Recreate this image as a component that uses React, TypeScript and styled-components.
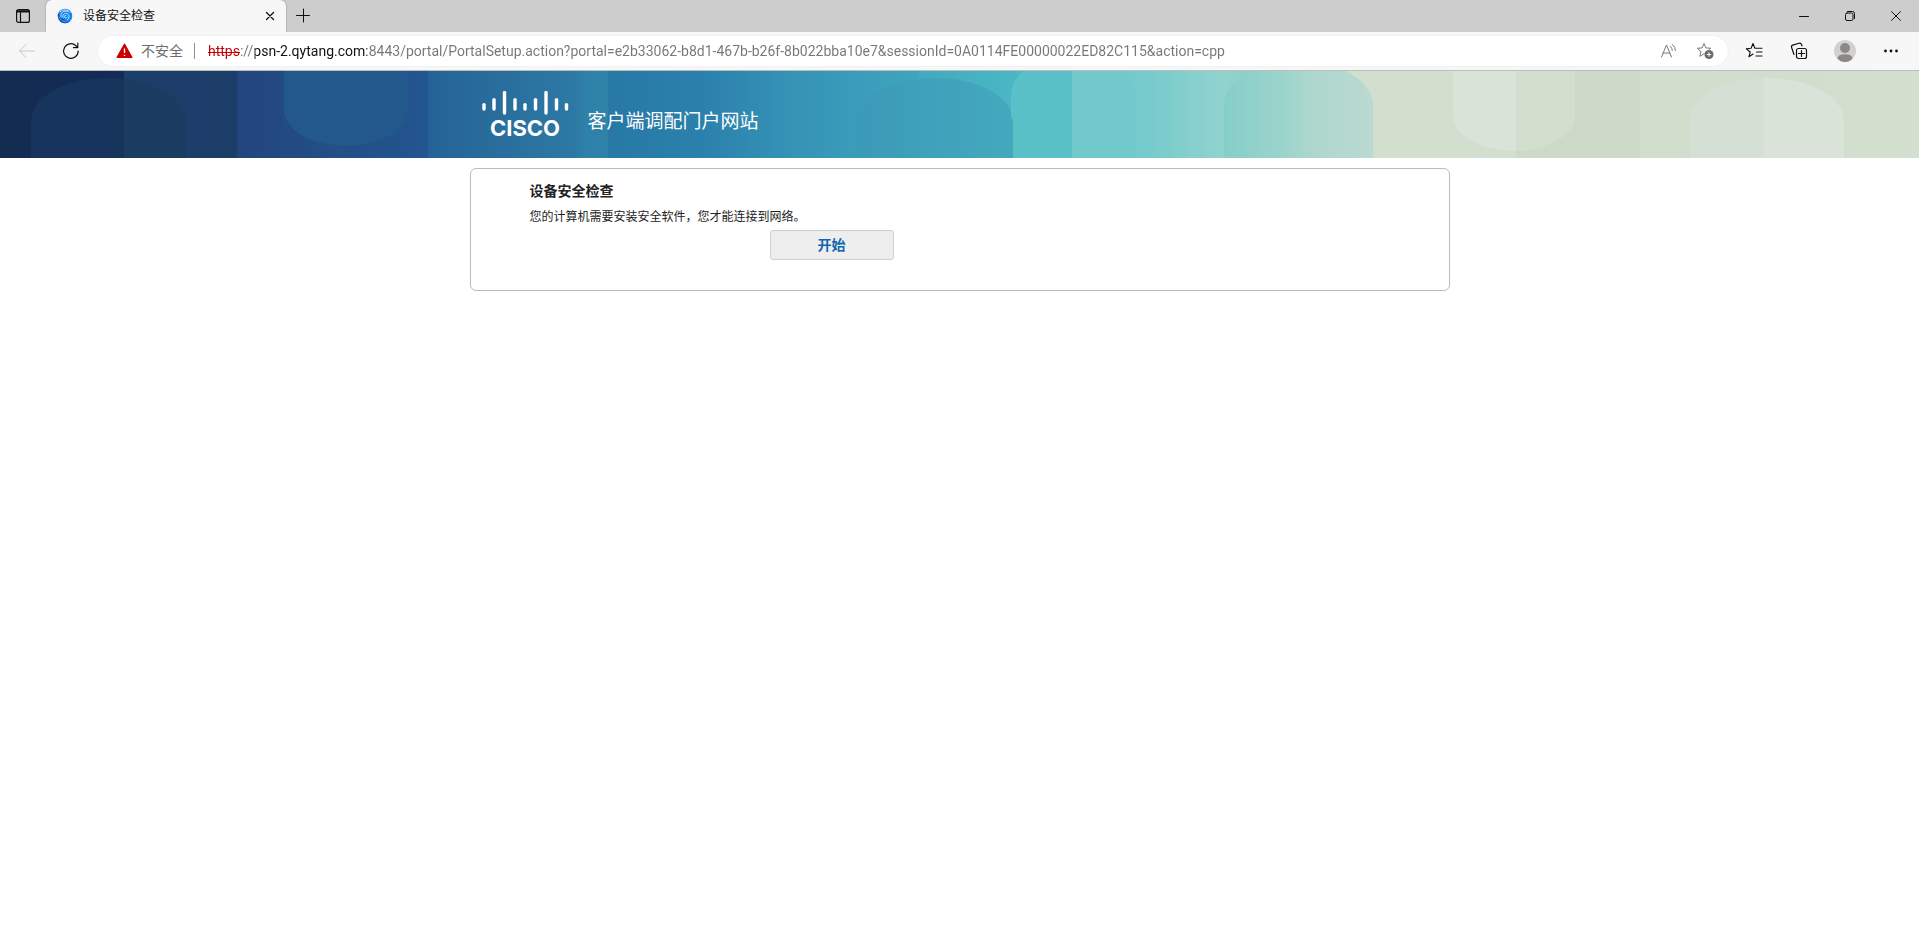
import React from "react";
import styled, { createGlobalStyle } from "styled-components";

const GlobalStyle = createGlobalStyle`
  * { box-sizing: border-box; }
  body {
    margin: 0;
    background: #fff;
    color: #1a1a1a;
    font-family: "Open Sans", "Noto Sans CJK SC", sans-serif;
    font-size: 12px;
  }
  button, input { font: inherit; color: inherit; }
`;

const TabStrip = styled.header`
  display: flex;
  height: 32px;
  background: #cdcdcd;
`;

const ChromeButton = styled.button<{ $width: number; $dim?: boolean }>`
  display: flex;
  align-items: center;
  justify-content: center;
  flex: none;
  width: ${(p) => p.$width}px;
  padding: 0;
  border: 0;
  background: none;
  color: ${(p) => (p.$dim ? "#c8c8c8" : "#111")};
`;

const Tab = styled.div`
  display: flex;
  align-items: center;
  width: 240px;
  padding-left: 11px;
  border-radius: 6px 6px 0 0;
  background: #f7f7f7;
  box-shadow: 0 0 2px rgba(0, 0, 0, 0.35);
  clip-path: inset(0 -3px 0 -3px);
`;

const TabTitle = styled.span`
  flex: 1;
  padding-left: 10px;
  color: #111;
  line-height: 18px;
`;

const WindowControls = styled.div`
  display: flex;
  margin-left: auto;
`;

const Toolbar = styled.nav`
  display: flex;
  height: 39px;
  padding: 4px 5px 4px 4px;
  border-bottom: 1px solid #bdbdbd;
  background: #f7f7f7;
`;

const AddressBar = styled.div`
  display: flex;
  align-items: center;
  flex: 1;
  height: 30px;
  margin: 0 4px 0 6px;
  padding: 0 5px 0 18px;
  border-radius: 15px;
  background: #fff;
  box-shadow: 0 0 2px rgba(0, 0, 0, 0.08);
`;

const SecurityButton = styled.button`
  display: flex;
  align-items: center;
  gap: 8px;
  padding: 0 11px 0 0;
  border: 0;
  border-right: 1px solid #8f8f8f;
  background: none;
  color: #6b6b6b;
  font-size: 14px;
  line-height: 16px;
`;

const UrlInput = styled.input`
  flex: 1;
  min-width: 0;
  height: 30px;
  margin-left: 13px;
  padding: 0;
  border: 0;
  outline: 0;
  font-family: Roboto, sans-serif;
  font-size: 14px;
  background-image:
    linear-gradient(#c5000b, #c5000b),
    linear-gradient(90deg, #c5000b 32px, #767676 32px 47px, #111 47px 159px, #767676 159px);
  background-size: 32px 1px, 100% 100%;
  background-position: 0 16px, 0 0;
  background-repeat: no-repeat;
  background-clip: padding-box, text;
  -webkit-text-fill-color: transparent;
`;

const Banner = styled.section`
  display: grid;
  height: 87px;
  overflow: hidden;
  background: #2a7aa8;
  > * { grid-area: 1 / 1; }
`;

const BannerArt = styled.svg`
  display: block;
  width: 100%;
  height: 87px;
`;

const BannerContent = styled.div`
  display: flex;
  align-items: flex-start;
  gap: 18px;
  width: 980px;
  max-width: 100%;
  margin: 0 auto;
  padding: 20px 12px 0;
`;

const BannerTitle = styled.h1`
  margin: 16px 0 0;
  color: #fff;
  font-size: 19px;
  font-weight: 400;
  line-height: 28px;
`;

const Card = styled.main`
  width: 980px;
  max-width: 100%;
  min-height: 123px;
  margin: 10px auto 0;
  padding: 12px 59px 30px;
  border: 1px solid #bcbcbc;
  border-radius: 6px;
`;

const CardHeading = styled.h2`
  margin: 0;
  color: #222;
  font-size: 14px;
  font-weight: 700;
  line-height: 20px;
`;

const CardText = styled.p`
  margin: 7px 0 5px;
  color: #222;
  line-height: 17px;
`;

const StartButton = styled.button`
  display: block;
  width: 124px;
  height: 30px;
  margin-left: 240px;
  padding: 0;
  border: 1px solid #d0d0d0;
  border-radius: 3px;
  background: #eee;
  color: #1167b1;
  font-size: 14px;
  font-weight: 700;
  line-height: 28px;
`;

const Stroke = ({ size = 16, width = 1, children }: { size?: number; width?: number; children: React.ReactNode }) => (
  <svg width={size} height={size} viewBox={`0 0 ${size} ${size}`} fill="none" stroke="currentColor" strokeWidth={width} strokeLinecap="round" strokeLinejoin="round" aria-hidden="true">
    {children}
  </svg>
);

const Favicon = () => (
  <svg width="16" height="16" viewBox="0 0 16 16" fill="none" aria-hidden="true">
    <circle cx="8" cy="8" r="7.3" fill="#1583e8" />
    <path d="M1 5 Q0 10 4 14 Q8 16.400 12 14 Q5 13 1 5Z" fill="#0a48b8" />
    <path d="M8.800 7.300a1.300 1.300 0 1 0 1.200 1.800M6 9.500C5 6.500 8 4.400 10.300 5.600C13 7.100 12.500 11 10 12M4 9C3 5 7 1.800 11 3.200M3.200 3.800C6 1 10.500 1.500 13 4.500" stroke="#d5efff" strokeWidth="0.900" strokeLinecap="round" />
    <path d="M2 8.500C3 12 6 14 9.500 14" stroke="#49b9f5" strokeWidth="0.900" />
  </svg>
);

const bars = [
  { x: 1.5, y: 12, h: 6 }, { x: 11.5, y: 7, h: 11 }, { x: 22, y: 0, h: 22 },
  { x: 32.5, y: 7, h: 11 }, { x: 42.5, y: 12, h: 6 }, { x: 53, y: 7, h: 11 },
  { x: 63.5, y: 0, h: 22 }, { x: 74, y: 7, h: 11 }, { x: 84, y: 12, h: 6 },
];

const CiscoLogo = () => (
  <svg width="88" height="56" viewBox="0 0 88 56" role="img" aria-label="Cisco">
    {bars.map((b) => (
      <line key={b.x} x1={b.x + 0.5} x2={b.x + 0.5} y1={b.y + 1.6} y2={b.y + b.h} stroke="#fff" strokeWidth="3.4" strokeLinecap="round" />
    ))}
    <text x="43" y="45" textAnchor="middle" fill="#fff" fontFamily="Inter, sans-serif" fontWeight="700" fontSize="22">CISCO</text>
  </svg>
);

const BannerBackdrop = () => (
  <BannerArt viewBox="0 0 1919 87" preserveAspectRatio="none" aria-hidden="true">
    <defs>
      <linearGradient id="sea" gradientUnits="userSpaceOnUse" x1="0" x2="1919" y1="0" y2="0">
        <stop offset="0" stopColor="#142c51" />
        <stop offset="0.0646" stopColor="#142a57" />
        <stop offset="0.0646" stopColor="#1c3e6b" />
        <stop offset="0.1235" stopColor="#1d3d69" />
        <stop offset="0.1235" stopColor="#22457c" />
        <stop offset="0.181" stopColor="#245088" />
        <stop offset="0.181" stopColor="#234f87" />
        <stop offset="0.223" stopColor="#235590" />
        <stop offset="0.223" stopColor="#256396" />
        <stop offset="0.3" stopColor="#2d79a5" />
        <stop offset="0.303" stopColor="#2e80a8" />
        <stop offset="0.317" stopColor="#2f83a9" />
        <stop offset="0.317" stopColor="#2778a5" />
        <stop offset="0.367" stopColor="#2b81ad" />
        <stop offset="0.41" stopColor="#3592b5" />
        <stop offset="0.45" stopColor="#3b9dbb" />
        <stop offset="0.479" stopColor="#3fa5bd" />
        <stop offset="0.479" stopColor="#42aabf" />
        <stop offset="0.528" stopColor="#4ab7c4" />
        <stop offset="0.54" stopColor="#53bdc6" />
        <stop offset="0.558" stopColor="#5dc2c9" />
        <stop offset="0.558" stopColor="#69c5ca" />
        <stop offset="0.6" stopColor="#77cbcd" />
        <stop offset="0.637" stopColor="#91d3ce" />
        <stop offset="0.65" stopColor="#8fcfc9" />
        <stop offset="0.69" stopColor="#cfdfcf" />
        <stop offset="0.715" stopColor="#d2dfce" />
        <stop offset="0.79" stopColor="#d2dfce" />
        <stop offset="0.79" stopColor="#cedac9" />
        <stop offset="0.8545" stopColor="#cedac9" />
        <stop offset="0.8545" stopColor="#d1decd" />
        <stop offset="0.92" stopColor="#d1dece" />
        <stop offset="1" stopColor="#d3dfcf" />
      </linearGradient>
      <linearGradient id="lagoon"><stop stopColor="#3b9ab8" /><stop offset="1" stopColor="#44a9be" /></linearGradient>
      <linearGradient id="foam"><stop stopColor="#86cec9" /><stop offset="0.4" stopColor="#9bd4cc" /><stop offset="0.600" stopColor="#aed7ce" /><stop offset="1" stopColor="#bbd9d0" /></linearGradient>
      <clipPath id="leftArch"><path d="M31 87V50A77.500 43 0 0 1 186 50V87Z" /></clipPath>
      <clipPath id="rightArch"><path d="M1690 87V50A77 43 0 0 1 1844 50V87Z" /></clipPath>
      <clipPath id="rightCup"><path d="M1453 0V44A61 36 0 0 0 1575 44V0Z" /></clipPath>
    </defs>
    <rect width="1919" height="87" fill="url(#sea)" />
    <g clipPath="url(#leftArch)">
      <rect x="31" width="93" height="87" fill="#17355c" />
      <rect x="124" width="62" height="87" fill="#1b3c61" />
    </g>
    <path d="M284 0V39A62 36 0 0 0 408 39V0Z" fill="#22588b" />
    <path d="M858 87V50A77.500 43 0 0 1 1013 50V87Z" fill="url(#lagoon)" />
    <path d="M1013 87V50L1011 45V24A62 40 0 0 1 1072 -16V87Z" fill="#5ac0c7" />
    <path d="M1072 -16A64 40 0 0 1 1136 24V87H1072Z" fill="#72c9cc" />
    <path d="M1224 87V34A74.500 44 0 0 1 1373 34V87Z" fill="url(#foam)" />
    <g clipPath="url(#rightCup)">
      <rect x="1453" width="63" height="87" fill="#d9e3d8" />
      <rect x="1516" width="60" height="87" fill="#d2dfce" />
    </g>
    <g clipPath="url(#rightArch)">
      <rect x="1690" width="74" height="87" fill="#d5e0d5" />
      <rect x="1764" width="80" height="87" fill="#d9e3d8" />
    </g>
  </BannerArt>
);

export default function App() {
  return (
    <>
      <GlobalStyle />
      <TabStrip>
        <ChromeButton $width={46} aria-label="Tab actions">
          <Stroke width={1.2}>
            <rect x="1.600" y="1.600" width="12.800" height="12.800" rx="2" />
            <path d="M2 4H14M2 2.800H14M5.500 5V14" />
          </Stroke>
        </ChromeButton>
        <Tab>
          <Favicon />
          <TabTitle>设备安全检查</TabTitle>
          <ChromeButton $width={32} aria-label="Close tab">
            <Stroke width={1.3}><path d="M4.500 4.500L11.500 11.500M11.500 4.500L4.500 11.500" /></Stroke>
          </ChromeButton>
        </Tab>
        <ChromeButton $width={34} aria-label="New tab">
          <Stroke><path d="M1.500 7.500H14.500M8.500 1V14" /></Stroke>
        </ChromeButton>
        <WindowControls>
          <ChromeButton $width={46} aria-label="Minimize">
            <Stroke><path d="M3.500 8.500H12.500" /></Stroke>
          </ChromeButton>
          <ChromeButton $width={46} aria-label="Restore">
            <Stroke>
              <rect x="3.500" y="5" width="7.500" height="7.500" rx="1.500" />
              <path d="M5.500 3.500H10.500Q12.500 3.500 12.500 5.500V10.500" />
            </Stroke>
          </ChromeButton>
          <ChromeButton $width={46} aria-label="Close">
            <Stroke><path d="M3.500 3.500L12.500 12.500M12.500 3.500L3.500 12.500" /></Stroke>
          </ChromeButton>
        </WindowControls>
      </TabStrip>
      <Toolbar>
        <ChromeButton $width={46} $dim aria-label="Back">
          <Stroke size={18}><path d="M1.500 9H16.500M8 2.500L1.500 9L8 15.500" /></Stroke>
        </ChromeButton>
        <ChromeButton $width={42} aria-label="Refresh">
          <Stroke size={18} width={1.2}>
            <path d="M16.200 9A7.300 7.300 0 1 1 13.900 3.700L15.800 5.600M15.800 1.200V5.600H11.400" />
          </Stroke>
        </ChromeButton>
        <AddressBar>
          <SecurityButton>
            <svg width="17" height="16" viewBox="0 0 17 16" aria-hidden="true">
              <path d="M8.500 0.800L16.200 14.500H0.800Z" fill="#c80000" stroke="#c80000" strokeLinejoin="round" />
              <path d="M8.500 5.500V10M8.500 11.700V13" stroke="#fff" strokeWidth="1.300" />
            </svg>
            不安全
          </SecurityButton>
          <UrlInput
            aria-label="Address"
            spellCheck={false}
            defaultValue="https://psn-2.qytang.com:8443/portal/PortalSetup.action?portal=e2b33062-b8d1-467b-b26f-8b022bba10e7&sessionId=0A0114FE00000022ED82C115&action=cpp"
          />
          <ChromeButton $width={36} aria-label="Read aloud">
            <svg width="18" height="18" viewBox="0 0 18 18" fill="none" stroke="#777" strokeLinecap="round" aria-hidden="true">
              <path d="M1.500 15L6.500 3L11.500 15M3.200 11H9.800M10.500 4.500Q12.300 6 12.300 8.500M12.500 2.500Q15.500 5 15.500 8.500" />
            </svg>
          </ChromeButton>
          <ChromeButton $width={36} aria-label="Add to favorites">
            <svg width="18" height="18" viewBox="0 0 18 18" fill="none" aria-hidden="true">
              <path d="M8 11.800L3.900 14.300L5 9.500L1.300 6.300L6.100 5.900L8 1.500L9.900 5.900L14.700 6.300L13.500 7.300" stroke="#777" strokeLinejoin="round" strokeLinecap="round" />
              <circle cx="13" cy="12.500" r="4.500" fill="#6b6b6b" />
              <path d="M10.800 12.500H15.200M13 10.300V14.700" stroke="#fff" />
            </svg>
          </ChromeButton>
        </AddressBar>
        <ChromeButton $width={44} aria-label="Favorites">
          <Stroke size={18} width={1.1}>
            <path d="M8 12L3.900 14.800L5.200 10L1.300 6.800L6.100 6.300L8 1.500L9.900 6.300H17M11.500 10H17M11 14H17" />
          </Stroke>
        </ChromeButton>
        <ChromeButton $width={46} aria-label="Collections">
          <Stroke size={18} width={1.2}>
            <rect x="6.500" y="6.500" width="10" height="10" rx="2" />
            <path d="M11.500 8.500V14.500M8.500 11.500H14.500M4 12.500L1.600 5.500Q1 3.800 2.700 3.100L9 1.200Q10.800 0.700 11.500 2.400L12 4" />
          </Stroke>
        </ChromeButton>
        <ChromeButton $width={46} aria-label="Profile">
          <svg width="22" height="22" viewBox="0 0 22 22" aria-hidden="true">
            <circle cx="11" cy="11" r="11" fill="#d3d1cf" />
            <circle cx="11" cy="8" r="5" fill="#8c8886" />
            <path d="M3.500 18.500Q4 14.300 11 14.300Q18 14.300 18.500 18.500Q15.500 22 11 22Q6.500 22 3.500 18.500Z" fill="#8c8886" />
          </svg>
        </ChromeButton>
        <ChromeButton $width={46} aria-label="Settings and more">
          <svg width="16" height="16" viewBox="0 0 16 16" fill="currentColor" aria-hidden="true">
            <circle cx="2.500" cy="8" r="1.400" /><circle cx="8" cy="8" r="1.400" /><circle cx="13.500" cy="8" r="1.400" />
          </svg>
        </ChromeButton>
      </Toolbar>
      <Banner>
        <BannerBackdrop />
        <BannerContent>
          <CiscoLogo />
          <BannerTitle>客户端调配门户网站</BannerTitle>
        </BannerContent>
      </Banner>
      <Card>
        <CardHeading>设备安全检查</CardHeading>
        <CardText>您的计算机需要安装安全软件，您才能连接到网络。</CardText>
        <StartButton>开始</StartButton>
      </Card>
    </>
  );
}
